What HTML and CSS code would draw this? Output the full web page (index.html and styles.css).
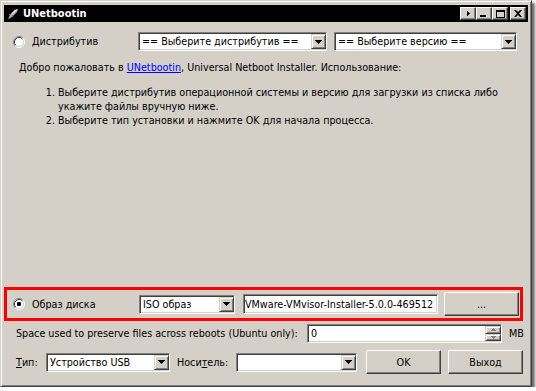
FILE: index.html
```html
<!DOCTYPE html>
<html lang="ru">
<head>
    <meta charset="UTF-8">
    <title>UNetbootin</title>
    <link rel="stylesheet" href="styles.css">
</head>
<body>
    <div class="window">
        <div class="titlebar">
            <svg class="app-icon" width="12" height="12" viewBox="0 0 12 12">
                <path d="M1 11 L3 7 L8 2 L11 1 L10 4 L5 9 Z" fill="#b8b8b8"/>
                <path d="M3 7 L8 2 L11 1 L5 6 Z" fill="#ffffff"/>
                <path d="M2 6 L5 6 L3 8 Z M6 9 L6 6 L4 9 Z" fill="#8c8c8c"/>
            </svg>
            <span class="title">UNetbootin</span>
            <div class="caption-buttons">
                <span class="cap-btn">
                    <svg width="3" height="5" viewBox="0 0 3 5"><path d="M0 0h1v1h1v1h1v1h-1v1h-1v1h-1z"/></svg>
                </span>
                <span class="cap-btn cap-min">
                    <svg width="6" height="2" viewBox="0 0 6 2"><path d="M0 0h6v2h-6z"/></svg>
                </span>
                <span class="cap-btn">
                    <svg width="9" height="8" viewBox="0 0 9 8"><path d="M0 0h9v8h-9z M1 2v5h7v-5z" fill-rule="evenodd"/></svg>
                </span>
                <span class="cap-btn cap-close">
                    <svg width="8" height="7" viewBox="0 0 8 7"><path d="M0 0h2l2 2 2-2h2l-3 3.5 3 3.5h-2l-2-2-2 2h-2l3-3.5z"/></svg>
                </span>
            </div>
        </div>

        <div class="client">
            <div class="row row-distro">
                <div class="choice">
                    <svg class="radio" width="12" height="12" viewBox="0 0 12 12">
                        <circle cx="6" cy="6" r="4.5" fill="#fff"/>
                        <path d="M2.11 9.89 A5.5 5.5 0 0 1 9.89 2.11" fill="none" stroke="#808080"/>
                        <path d="M9.89 2.11 A5.5 5.5 0 0 1 2.11 9.89" fill="none" stroke="#fff"/>
                        <path d="M2.82 9.18 A4.5 4.5 0 0 1 9.18 2.82" fill="none" stroke="#404040"/>
                        <path d="M9.18 2.82 A4.5 4.5 0 0 1 2.82 9.18" fill="none" stroke="#d4d0c8"/>
                    </svg>
                    <span><u>Д</u>истрибутив</span>
                </div>
                <div class="combo combo-distro">
                    <span class="field-text">== Выберите дистрибутив ==</span>
                    <span class="drop-btn"><svg width="7" height="4" viewBox="0 0 7 4"><path d="M0 0h7v1h-1v1h-1v1h-1v1h-1v-1h-1v-1h-1v-1h-1z"/></svg></span>
                </div>
                <div class="combo combo-version">
                    <span class="field-text">== Выберите версию ==</span>
                    <span class="drop-btn"><svg width="7" height="4" viewBox="0 0 7 4"><path d="M0 0h7v1h-1v1h-1v1h-1v1h-1v-1h-1v-1h-1v-1h-1z"/></svg></span>
                </div>
            </div>

            <div class="info">
                <p>Добро пожаловать в <a href="#">UNetbootin</a>, Universal Netboot Installer. Использование:</p>
                <ol>
                    <li>Выберите дистрибутив операционной системы и версию для загрузки из списка либо<br>укажите файлы вручную ниже.</li>
                    <li>Выберите тип установки и нажмите OK для начала процесса.</li>
                </ol>
            </div>

            <div class="spacer"></div>

            <div class="row row-disk">
                <div class="choice">
                    <svg class="radio" width="12" height="12" viewBox="0 0 12 12">
                        <circle cx="6" cy="6" r="4.5" fill="#fff"/>
                        <path d="M2.11 9.89 A5.5 5.5 0 0 1 9.89 2.11" fill="none" stroke="#808080"/>
                        <path d="M9.89 2.11 A5.5 5.5 0 0 1 2.11 9.89" fill="none" stroke="#fff"/>
                        <path d="M2.82 9.18 A4.5 4.5 0 0 1 9.18 2.82" fill="none" stroke="#404040"/>
                        <path d="M9.18 2.82 A4.5 4.5 0 0 1 2.82 9.18" fill="none" stroke="#d4d0c8"/>
                        <rect x="4" y="4" width="4" height="4" rx="1.2" fill="#000"/>
                    </svg>
                    <span>Образ <u>д</u>иска</span>
                </div>
                <div class="combo combo-iso">
                    <span class="field-text">ISO образ</span>
                    <span class="drop-btn"><svg width="7" height="4" viewBox="0 0 7 4"><path d="M0 0h7v1h-1v1h-1v1h-1v1h-1v-1h-1v-1h-1v-1h-1z"/></svg></span>
                </div>
                <div class="edit edit-file">
                    <span class="field-text">VMware-VMvisor-Installer-5.0.0-469512</span>
                </div>
                <span class="button button-browse">...</span>
            </div>

            <div class="row row-space">
                <span class="space-label">Space used to preserve files across reboots (Ubuntu only):</span>
                <div class="edit spin">
                    <span class="field-text">0</span>
                    <span class="spin-btns">
                        <span class="spin-btn"><svg width="5" height="3" viewBox="0 0 5 3"><path d="M2 0h1v1h1v1h1v1h-5v-1h1v-1h1z"/></svg></span>
                        <span class="spin-btn"><svg width="5" height="3" viewBox="0 0 5 3"><path d="M0 0h5v1h-1v1h-1v1h-1v-1h-1v-1h-1z"/></svg></span>
                    </span>
                </div>
                <span class="unit">MB</span>
            </div>

            <div class="row row-bottom">
                <span class="type-label"><u>Т</u>ип:</span>
                <div class="combo combo-type">
                    <span class="field-text">Устройство USB</span>
                    <span class="drop-btn"><svg width="7" height="4" viewBox="0 0 7 4"><path d="M0 0h7v1h-1v1h-1v1h-1v1h-1v-1h-1v-1h-1v-1h-1z"/></svg></span>
                </div>
                <span class="drive-label">Носи<u>т</u>ель:</span>
                <div class="combo combo-drive">
                    <span class="field-text"></span>
                    <span class="drop-btn"><svg width="7" height="4" viewBox="0 0 7 4"><path d="M0 0h7v1h-1v1h-1v1h-1v1h-1v-1h-1v-1h-1v-1h-1z"/></svg></span>
                </div>
                <span class="button button-ok">OK</span>
                <span class="button button-exit">Выход</span>
            </div>
        </div>
    </div>
</body>
</html>
```

FILE: styles.css
```css
body {
    margin: 0;
    background: #ffffff;
    font-family: "DejaVu Sans Condensed", "Liberation Sans", sans-serif;
    font-size: 10.7px;
    color: #000;
}
.window {
    width: 532px;
    height: 387px;
    box-sizing: border-box;
    background: #d4d0c8;
    border: 1px solid;
    border-color: #d4d0c8 #404040 #404040 #d4d0c8;
    box-shadow: inset 1px 1px #fff, inset -1px -1px #808080, 3px 3px 2px rgba(0, 0, 0, 0.55);
    padding: 4px 3px 3px 3px;
    display: flex;
    flex-direction: column;
}
.titlebar {
    height: 17px;
    background: #000;
    display: flex;
    align-items: center;
    padding: 0 2px 0 3px;
}
.app-icon {
    margin-right: 4px;
}
.title {
    color: #fff;
    font-weight: bold;
    font-size: 11px;
    flex: 1;
}
.caption-buttons {
    display: flex;
    align-items: center;
}
.cap-btn {
    width: 16px;
    height: 13px;
    box-sizing: border-box;
    background: #d4d0c8;
    border: 1px solid;
    border-color: #fff #404040 #404040 #fff;
    box-shadow: inset -1px -1px #808080;
    display: flex;
    align-items: center;
    justify-content: center;
}
.cap-min svg {
    margin-top: 5px;
    margin-left: -2px;
}
.cap-close {
    margin-left: 2px;
}
.client {
    flex: 1;
    display: flex;
    flex-direction: column;
    padding: 0 9px 9px 4px;
}
.row {
    display: flex;
    align-items: center;
    flex-shrink: 0;
}
.row-distro {
    margin-top: 10px;
    height: 19px;
    padding-right: 2px;
}
.choice {
    display: flex;
    align-items: center;
    gap: 7px;
    box-sizing: border-box;
    width: 130px;
    padding-left: 5px;
    flex-shrink: 0;
}
.radio {
    flex-shrink: 0;
}
.combo,
.edit {
    height: 19px;
    box-sizing: border-box;
    background: #fff;
    border: 1px solid;
    border-color: #808080 #fff #fff #808080;
    box-shadow: inset 1px 1px #404040, inset -1px -1px #d4d0c8;
    padding: 2px 2px 2px 3px;
    display: flex;
    align-items: center;
    flex-shrink: 0;
    overflow: hidden;
}
.field-text {
    flex: 1;
    min-width: 0;
    white-space: nowrap;
    overflow: hidden;
}
.drop-btn {
    width: 15px;
    height: 15px;
    box-sizing: border-box;
    background: #d4d0c8;
    border: 1px solid;
    border-color: #d4d0c8 #404040 #404040 #d4d0c8;
    box-shadow: inset 1px 1px #fff, inset -1px -1px #808080;
    display: flex;
    align-items: center;
    justify-content: center;
    flex-shrink: 0;
    margin-right: -2px;
}
.combo-distro {
    width: 189px;
}
.combo-version {
    flex: 1;
    margin-left: 7px;
}
.info {
    margin-top: 10px;
    padding-left: 11px;
    line-height: 14px;
}
.info p {
    margin: 0;
}
.info a {
    color: #0000ff;
}
.info ol {
    margin: 11px 0 0 0;
    padding-left: 39px;
}
.spacer {
    flex: 1;
}
.row-disk {
    height: 34px;
    box-sizing: border-box;
    border: 3px solid #ff0000;
    margin: 0 -4px 3px -4px;
    padding: 0 1px 0 0;
}
.row-disk .choice {
    width: 132px;
    padding-left: 6px;
}
.combo-iso {
    width: 96px;
}
.edit-file {
    width: 195px;
    height: 20px;
    margin-left: 8px;
    padding-left: 1px;
}
.button {
    height: 24px;
    box-sizing: border-box;
    background: #d4d0c8;
    border: 1px solid;
    border-color: #fff #404040 #404040 #fff;
    box-shadow: inset -1px -1px #808080;
    display: flex;
    align-items: center;
    justify-content: center;
    flex-shrink: 0;
    width: 75px;
}
.button-browse {
    margin-left: 6px;
}
.row-space {
    height: 19px;
    margin-bottom: 7px;
    padding-left: 8px;
}
.space-label {
    width: 291px;
    white-space: nowrap;
    flex-shrink: 0;
}
.spin {
    width: 195px;
    padding-right: 1px;
}
.spin-btns {
    display: flex;
    flex-direction: column;
    width: 16px;
    height: 15px;
    margin-right: -1px;
}
.spin-btn {
    flex: 1;
    box-sizing: border-box;
    background: #d4d0c8;
    border: 1px solid;
    border-color: #d4d0c8 #404040 #404040 #d4d0c8;
    box-shadow: inset 1px 1px #fff, inset -1px -1px #808080;
    display: flex;
    align-items: center;
    justify-content: center;
}
.spin-btn svg {
    fill: #808080;
}
.unit {
    margin-left: 7px;
}
.row-bottom {
    height: 24px;
    padding-left: 8px;
}
.type-label {
    width: 30px;
    flex-shrink: 0;
}
.combo-type {
    width: 124px;
}
.drive-label {
    margin-left: 7px;
    width: 59px;
    flex-shrink: 0;
}
.combo-drive {
    width: 121px;
}
.button-ok {
    margin-left: 9px;
}
.button-exit {
    margin-left: 7px;
}
```
